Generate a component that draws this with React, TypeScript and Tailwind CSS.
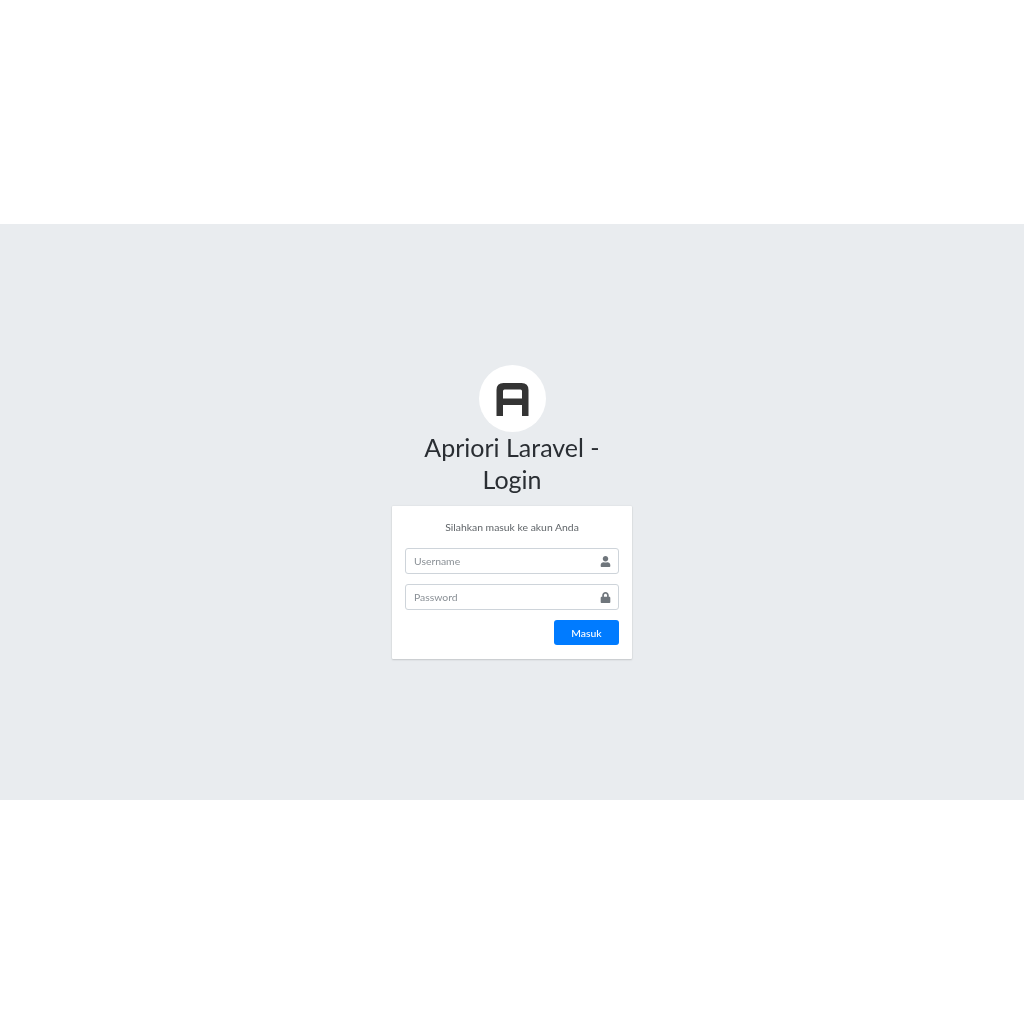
import { FaLock, FaUser } from "react-icons/fa";

const Field = ({ placeholder, type, icon }: { placeholder: string; type: string; icon: React.ReactNode }) => (
  <div className="flex h-[26px] w-full items-center rounded-[3px] border border-[#ced4da] bg-white pl-[8px] pr-[7px]">
    <input
      type={type}
      placeholder={placeholder}
      className="min-w-0 flex-1 bg-transparent pt-px text-[10.4px] text-[#495057] outline-none placeholder:text-[#8a9096]"
    />
    <span className="text-[11px] text-[#6f767c]">{icon}</span>
  </div>
);

export default function App() {
  return (
    <div className="flex h-screen w-full items-center bg-white font-['Lato','Liberation_Sans',sans-serif]">
      <div className="flex h-[576px] w-full flex-col items-center justify-center bg-[#e9ecef]">
        <div className="flex w-[240px] flex-col items-center will-change-transform">
          <div className="flex h-[67px] w-[67px] items-center justify-center rounded-full bg-white">
            <svg className="mt-[2px]" width="33" height="33" viewBox="0 0 33 33" fill="#343434" fillRule="evenodd">
              <path d="M0.5 33V7Q0.5 0 7.5 0H25.5Q32.5 0 32.5 7V33H26V22H7V33ZM7 15.5H26V8Q26 6.5 24.5 6.5H8.5Q7 6.5 7 8Z" />
            </svg>
          </div>
          <h1 className="mb-[11px] -mt-px w-[200px] text-center text-[25px] leading-[32px] font-normal text-[#2a2e33]">
            Apriori Laravel - Login
          </h1>
          <div className="w-full rounded-[1px] bg-white px-[13px] pt-[13px] pb-[14px] shadow-[0_0_2px_rgba(0,0,0,0.1),0_1px_2px_rgba(0,0,0,0.14)]">
            <p className="mb-[13px] text-center text-[10.4px] leading-[16px] text-[#5f6468]">
              Silahkan masuk ke akun Anda
            </p>
            <div className="mb-[10px]">
              <Field placeholder="Username" type="text" icon={<FaUser />} />
            </div>
            <div className="mb-[10px]">
              <Field placeholder="Password" type="password" icon={<FaLock />} />
            </div>
            <div className="flex justify-end">
              <button className="h-[25px] w-[65px] rounded-[3px] bg-[#007bff] pt-[2px] text-[10.4px] font-medium text-white">
                Masuk
              </button>
            </div>
          </div>
        </div>
      </div>
    </div>
  );
}
